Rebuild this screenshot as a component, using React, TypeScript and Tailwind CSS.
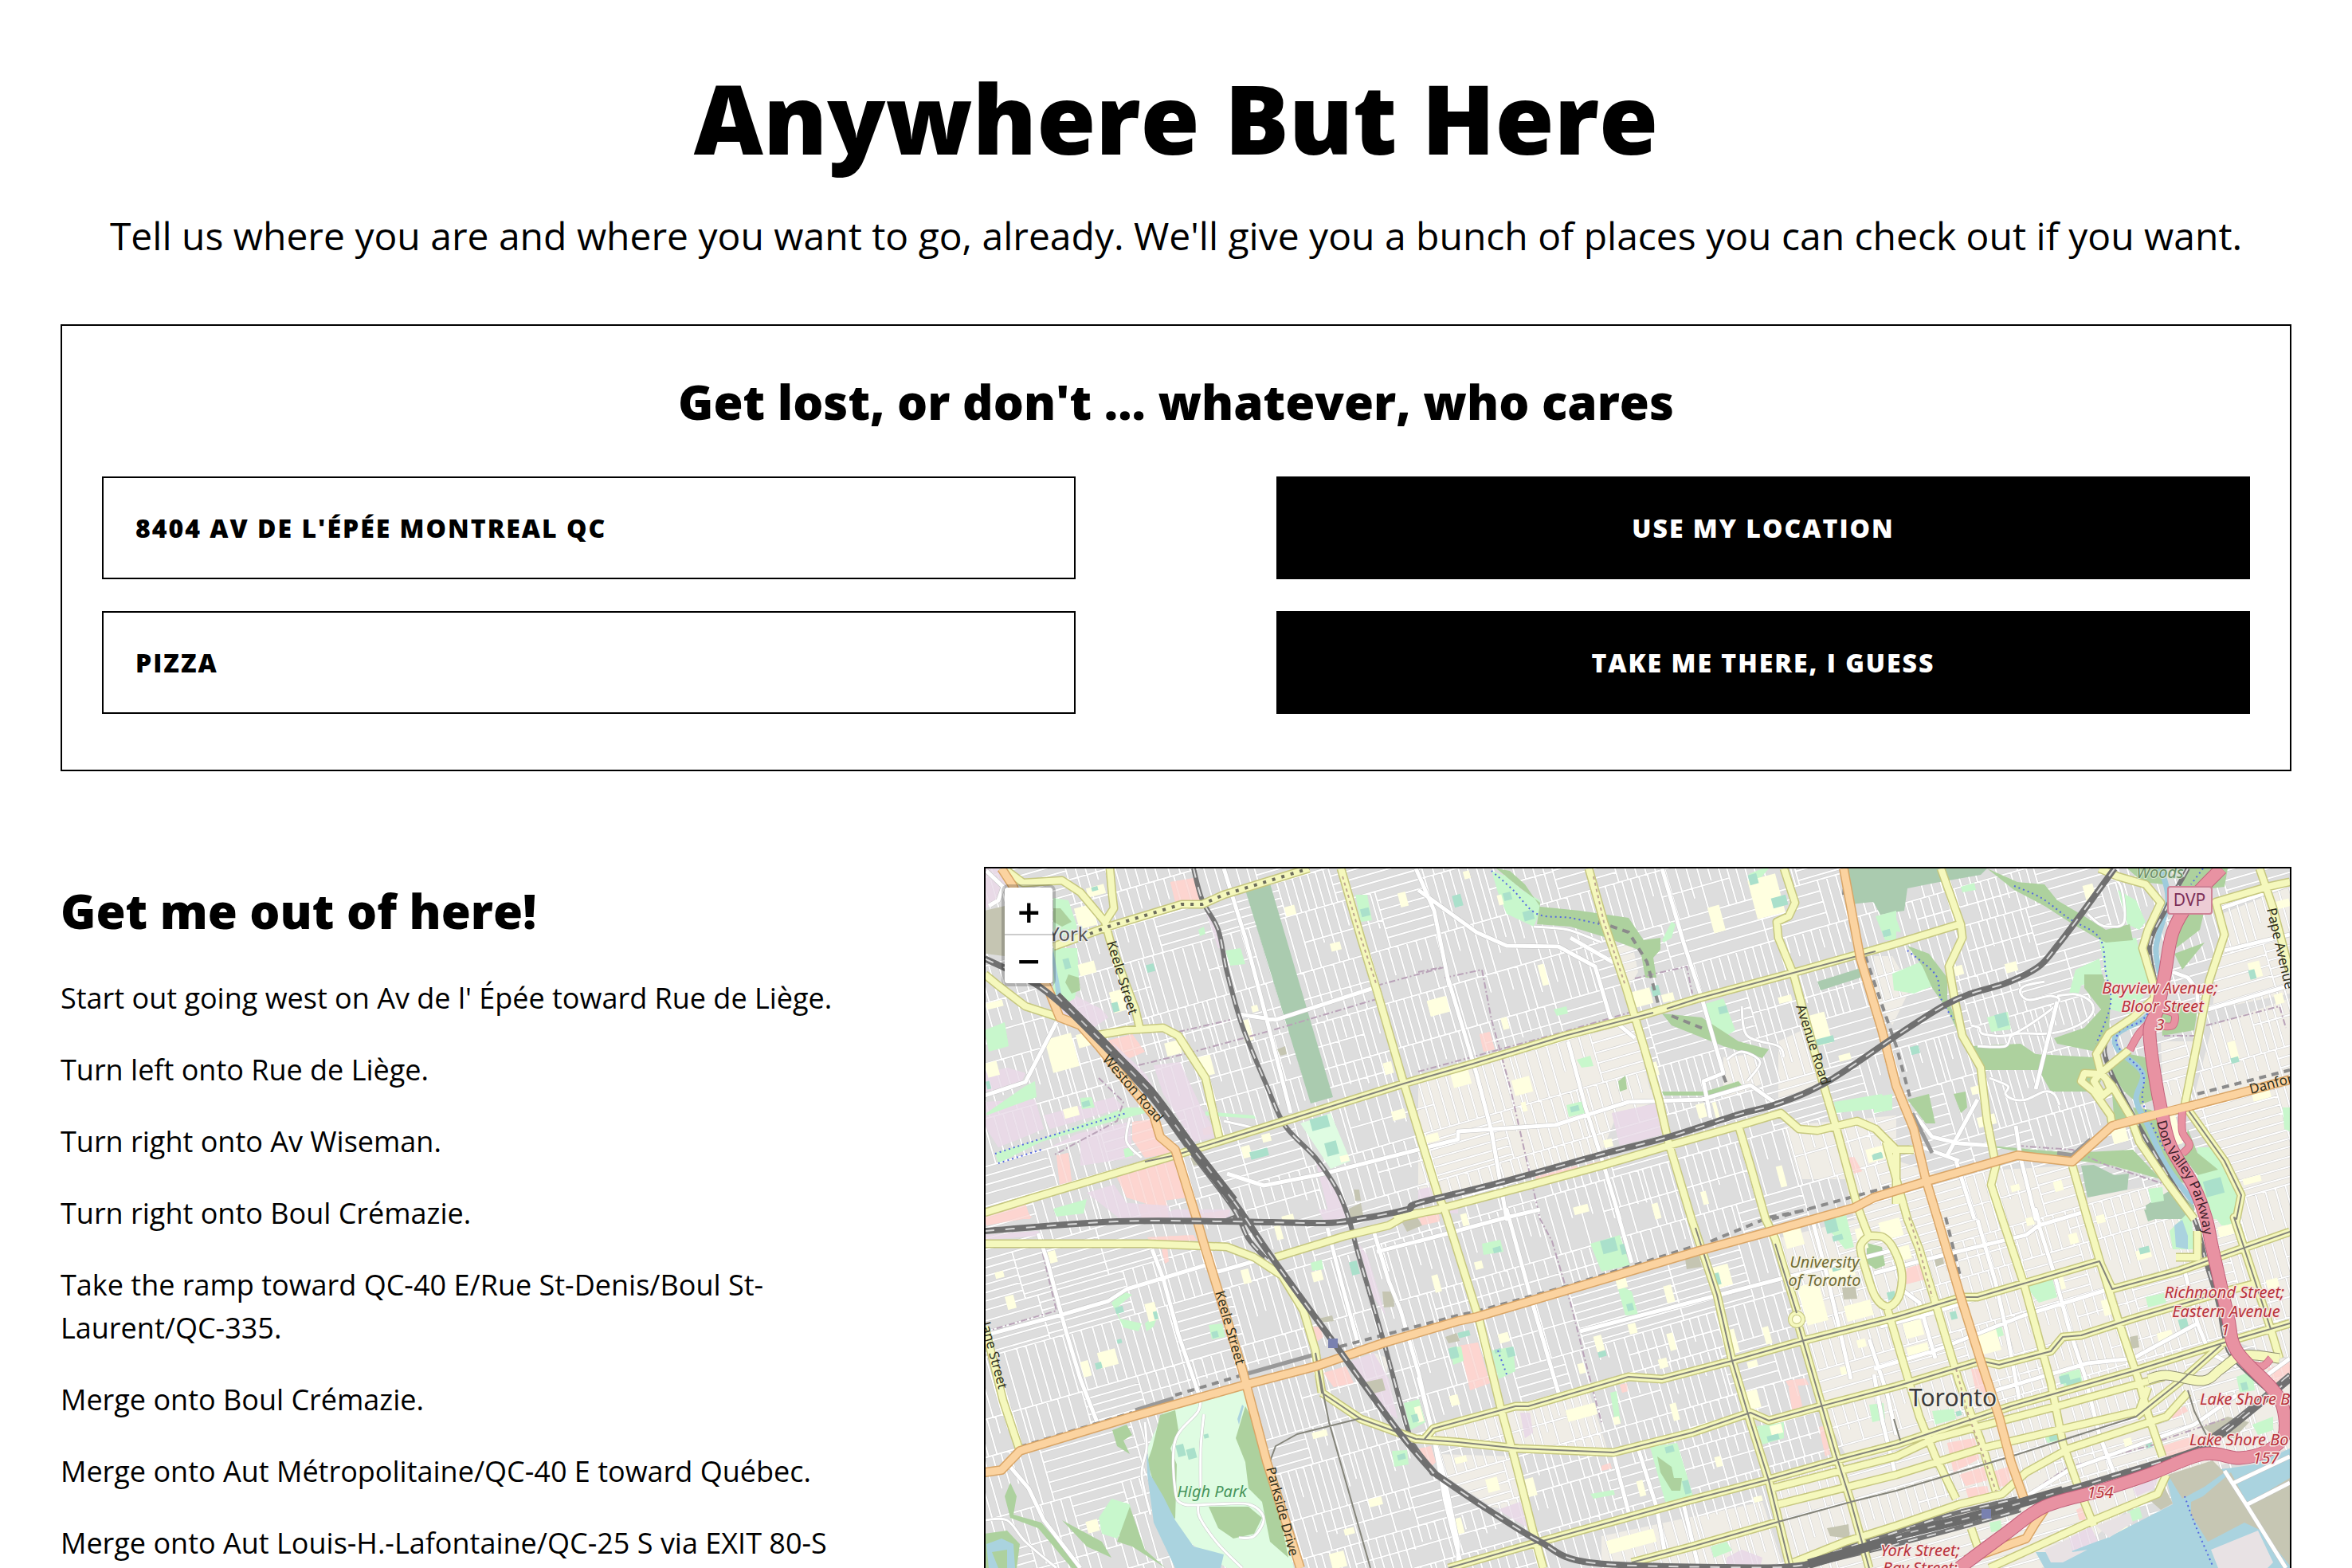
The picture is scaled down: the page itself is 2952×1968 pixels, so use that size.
import { useMemo } from "react";

type Pt = [number, number];

/* Survey sheets A-C (north row) and D-F (south row), each with its own origin on the map. */
const SHEETS: Record<string, Pt> = {
  A: [-7, -10],
  B: [543, -10],
  C: [1115, -10],
  D: [-7, 428],
  E: [543, 428],
  F: [1115, 428],
};

function points(src: string): Pt[] {
  let origin: Pt = SHEETS.A;
  const out: Pt[] = [];
  for (const token of src.trim().split(/\s+/)) {
    if (SHEETS[token]) {
      origin = SHEETS[token];
      continue;
    }
    const [x, y] = token.split(",").map(Number);
    out.push([Math.round(x * 0.3827 + origin[0]), Math.round(y / 3 + origin[1])]);
  }
  return out;
}

function line(src: string): string {
  return "M" + points(src).map((p) => p.join(",")).join("L");
}

function area(src: string): string {
  return line(src) + "Z";
}

/* Catmull-Rom curve through the points. */
function curve(src: string): string {
  const p = points(src);
  let d = `M${p[0][0]},${p[0][1]}`;
  for (let i = 0; i < p.length - 1; i++) {
    const a = p[Math.max(0, i - 1)];
    const b = p[i];
    const c = p[i + 1];
    const e = p[Math.min(p.length - 1, i + 2)];
    const f = (n: number) => n.toFixed(1);
    d += `C${f(b[0] + (c[0] - a[0]) / 6)},${f(b[1] + (c[1] - a[1]) / 6)} ${f(c[0] - (e[0] - b[0]) / 6)},${f(c[1] - (e[1] - b[1]) / 6)} ${c[0]},${c[1]}`;
  }
  return d;
}

const BEIGE = [
  "B 0,840 490,670 710,600 720,680 760,860 800,900 650,960 600,1100 0,1290",
  "B 1000,740 1100,730 1130,840 1000,900",
  "B 1180,680 1260,640 1320,850 1180,900",
  "B 1200,1000 1568,960 1568,1350 1430,1350 1400,1200 1250,1200",
  "B 640,330 700,300 720,420 690,480",
  "C 0,360 60,360 120,480 60,620 0,500",
  "C 0,1100 200,1180 640,1150 700,1350 0,1350",
  "C 940,680 1050,680 1010,930 950,930",
  "C 1110,620 1365,520 1365,1350 1210,1350 1200,1200 1040,930",
  "C 1140,200 1365,100 1365,500 1110,560",
  "C 700,1270 980,1210 1060,1350 700,1350",
  "D 1290,540 1340,560 1330,640 1260,600",
  "E 1170,110 1568,0 1568,1350 1230,1350 1150,1000 1400,920 1300,700 1250,440",
  "E 280,740 560,680 620,900 300,890 60,860 60,820",
  "E 60,920 320,930 360,1150 240,1120 80,1000",
  "E 600,1230 1130,1100 1200,1350 600,1350",
  "F 0,0 1060,0 1180,560 1365,560 1365,900 960,1010 600,1350 0,1350",
  "F 1100,0 1365,0 1365,560 1190,500",
];

const INDUSTRIAL = [
  "A 15,30 60,30 85,100 40,170 15,180",
  "A 15,800 90,780 150,800 130,850 15,870",
  "A 15,910 180,900 210,1010 60,1080 15,1000",
  "A 230,1080 320,1030 490,985 500,1120 330,1150 330,1050",
  "A 210,960 440,890 470,930 230,1010",
  "A 280,490 400,560 420,590 360,640 260,570",
  "A 570,770 655,760 720,920 780,1040 700,1060 600,880",
  "A 430,680 540,800 580,880 560,900",
  "A 350,1250 440,1220 480,1290 620,1300 620,1350 460,1350",
  "A 735,170 770,240 800,330 780,330",
  "A 1100,1130 1140,1180 1210,1350 1150,1350",
  "A 1480,1320 1568,1290 1568,1330",
  "B 635,950 780,915 810,1030 660,1075",
  "B 0,1240 40,1230 50,1270 0,1280",
  "D 15,95 190,80 200,100 15,115",
  "D 550,40 640,0 820,0 820,50",
  "D 1110,0 1200,0 1210,45 1130,45",
  "D 1200,580 1290,540 1340,640 1370,790 1310,740",
  "D 1240,130 1270,170 1330,400 1290,330",
  "E 335,765 365,765 375,840 350,860",
  "E 260,1130 335,1100 360,1200",
  "E 1010,1310 1060,1280 1130,1310 1120,1345 1010,1345",
  "F 640,1240 710,1195 735,1250 650,1290",
  "F 850,1050 930,1010 920,1050 860,1080",
];

const RETAIL = [
  "A 625,80 700,65 720,150 640,155",
  "A 410,680 500,655 540,720 490,745 460,730",
  "A 500,985 565,975 590,1050 640,1100 540,1120 500,1050",
  "A 440,1170 640,1120 680,1270 540,1290 480,1270",
  "A 250,1110 290,1100 300,1210 260,1220",
  "A 15,1335 150,1290 165,1350 15,1350",
  "A 730,1010 755,1000 760,1030 735,1035",
  "A 520,1300 610,1270 620,1350 530,1350",
  "B 200,655 235,645 250,710 215,720",
  "B 385,1190 520,1150 525,1165 390,1205",
  "B 550,1145 740,1090 740,1105 560,1160",
  "B 0,1330 65,1320 70,1350 0,1350",
  "B 1410,1120 1430,1115 1455,1170 1430,1180",
  "D 15,30 150,0 170,30 20,60",
  "D 700,20 820,0 810,30 740,45",
  "D 550,105 700,95 710,118 560,120",
  "D 595,150 615,148 620,195 605,205",
  "D 1125,615 1200,590 1225,655 1160,670",
  "D 1440,900 1480,890 1495,950 1480,970",
  "D 1090,440 1115,440 1125,480 1100,500",
  "E 135,512 195,500 235,655 170,680",
  "E 0,15 60,5 70,45 10,60",
  "E 1215,670 1245,660 1260,740 1225,755",
  "E 1205,645 1270,635 1280,660 1215,665",
  "E 1315,820 1330,815 1350,920 1335,930",
  "E 660,660 685,655 688,685 670,690",
  "E 600,965 630,955 635,975 600,985",
  "F 80,230 160,205 165,265 95,285",
  "F 320,600 350,600 400,690 340,710",
  "F 240,880 330,860 345,940 260,990",
  "F 280,1000 360,970 370,1020 300,1040",
  "F 385,990 440,970 450,1040 400,1045",
  "F 300,1050 370,1040 380,1080 310,1090",
  "F 945,890 1060,850 1080,900 960,940",
  "F 970,770 1020,740 1030,760 980,790",
  "F 1290,600 1365,570 1365,650 1330,680",
  "F 665,1130 685,1120 695,1170 675,1170",
];

const BROWN = [
  "A 15,190 80,170 80,360 15,350",
  "A 690,1120 715,1110 720,1145 700,1150",
  "A 975,710 1000,700 1005,730 985,735",
  "A 1210,1310 1250,1290 1260,1350 1215,1350",
  "A 1225,1240 1245,1240 1250,1280 1230,1280",
  "D 1320,310 1355,310 1360,365 1325,370",
  "D 1260,650 1320,635 1330,680 1280,695",
  "D 1380,40 1430,20 1450,60 1400,85",
  "D 1110,410 1155,400 1160,420 1120,425",
  "E 875,185 920,170 930,215 880,225",
  "E 1340,1200 1410,1185 1415,1240 1350,1230",
  "E 1390,295 1435,290 1440,335 1395,340",
  "E 90,480 125,465 135,495 100,505",
  "F 1080,820 1160,780 1230,800 1180,860 1110,850",
  "F 840,480 865,475 870,520 845,525",
  "F 195,180 225,175 230,205 205,215",
];

const CEMETERY = [
  "A 870,110 950,88 1158,890 1085,915",
  "B 1408,30 C 370,30 350,55 200,85 110,105 100,190 20,205 0,160 B 1490,155 1420,165",
  "B 1310,455 1450,405 1450,440 1320,490",
  "C 680,1150 720,1145 790,1185 835,1180 830,1240 700,1270",
  "C 890,1300 980,1235 1050,1300 1050,1350 895,1350",
  "F 885,0 1020,0 900,45",
];

const PARK = [
  "A 240,140 290,150 320,250 300,290 240,270",
  "A 240,330 320,330 325,440 310,520 280,540 240,500",
  "A 15,640 80,610 95,700 30,720",
  "A 20,950 150,850 180,830 185,890 20,960",
  "A 50,1100 220,1040 480,930 540,930 540,950 440,980 200,1060 60,1140",
  "A 805,340 855,330 870,390 820,395",
  "A 1230,130 1270,130 1285,225 1250,230",
  "A 715,260 735,250 740,275 720,285",
  "A 740,945 900,960 905,972 740,960",
  "A 240,1310 350,1275 340,1330 250,1340",
  "A 470,1085 495,1080 505,1110 475,1120",
  "A 330,895 365,890 375,930 335,935",
  "B 240,40 290,60 340,110 400,150 400,190 380,250 290,200 260,120",
  "B 940,540 1000,520 1040,640 1010,660 970,670",
  "B 485,920 540,905 550,950 495,965",
  "B 520,750 565,735 575,775 535,780",
  "B 1365,910 1520,880 1540,930 1370,950",
  "B 1500,210 1568,190 1568,300 1530,300",
  "B 445,560 485,550 490,575 455,585",
  "B 830,230 845,240 830,290 805,310 800,300",
  "B 1085,50 1130,30 1150,30 1090,110",
  "C 60,425 180,370 195,470 130,500 65,490",
  "C 800,110 860,150 890,230 870,260 830,240",
  "C 660,410 740,370 750,440 680,470 670,510 640,500",
  "C 740,300 860,290 880,380 910,470 840,580 775,560 760,440",
  "C 370,590 440,570 450,635 385,645",
  "C 285,100 330,85 335,110 290,120",
  "C 20,205 70,210 90,270 40,260",
  "C 0,890 60,880 60,940 0,950",
  "C 1060,1080 1110,1080 1205,1260 1185,1350 1110,1350 1060,1210",
  "C 550,750 610,740 610,775 560,775",
  "C 900,1235 945,1230 950,1280 910,1290",
  "C 1340,930 1365,930 1365,1020 1345,1010",
  "D 430,350 470,310 500,320 450,370 460,410 530,430 520,460 470,445",
  "D 750,435 795,430 805,480 760,490",
  "D 390,1160 430,1090 490,1110 500,1150 450,1240 400,1220",
  "D 540,430 585,390 570,440 545,460",
  "D 1085,200 1120,190 1125,225 1090,230",
  "D 1350,910 1400,905 1405,960 1360,970",
  "D 1390,730 1440,715 1460,800 1410,830",
  "E 210,130 270,115 280,160 215,170",
  "E 565,130 660,95 695,210 600,235",
  "E 240,530 310,515 320,610 265,640",
  "E 650,280 700,310 720,395 680,400",
  "E 105,520 140,515 150,570 115,585",
  "E 630,690 650,685 665,800 645,800",
  "E 760,895 850,880 905,1090 810,1100",
  "E 1110,815 1200,800 1200,860 1130,885",
  "E 1480,735 1525,730 1530,790 1490,800",
  "E 1325,25 1400,10 1430,140 1400,150 1350,80",
  "E 960,1270 1010,1250 1030,1285 970,1310",
  "E 565,1070 640,1055 645,1075 575,1090",
  "F 500,290 585,260 600,330 540,350",
  "F 610,620 675,600 685,650 625,670",
  "F 890,330 950,315 960,350 900,370",
  "F 190,760 260,750 270,790 200,810",
  "F 550,830 600,820 610,870 570,880",
  "F 380,440 415,430 425,475 390,485",
  "F 1190,630 1240,610 1250,680 1200,690",
  "F 1100,0 1190,0 1180,60 1140,60",
  "F 380,1180 415,1170 420,1210 385,1215",
  "F 830,1140 870,1120 880,1160 840,1180",
  "F 970,80 1040,0 1050,150 980,150",
  "F 1240,810 1310,780 1310,830 1260,850",
];

const MEADOW = [
  "A 1050,990 1150,950 1215,1130 1150,1160",
  "D 600,765 870,675 950,960 1030,1350 810,1350 740,1300 650,1220 560,1000 550,900",
  "B 1100,140 1150,130 1160,190 1110,200",
];

const FOREST = [
  "A 290,430 325,440 330,490 300,500 280,460",
  "A 240,180 265,180 300,230 270,250 240,230",
  "B 255,30 300,40 350,90 400,175 530,190 690,215 740,300 795,290 795,335 770,365 780,440 745,440 730,340 620,290 500,250 390,240 400,160 330,100",
  "B 800,575 930,590 1050,680 1150,710 1130,745 1000,700 830,620",
  "B 800,870 940,870 1050,830 1060,845 950,885 805,885",
  "B 655,830 680,810 685,860 660,870",
  "C 370,30 470,80 560,90 600,150 690,210 760,260 840,240 850,300 760,310 730,290 640,230 560,170 460,110",
  "C 690,430 750,430 775,520 770,650 730,720 600,690 590,670 690,630 745,560 690,480",
  "C 110,320 180,350 240,440 240,520 270,600 320,700 480,690 530,730 720,740 745,830 720,870 580,870 540,790 350,790 290,680 240,560 190,480 160,400",
  "C 1030,30 1160,30 1150,100 1000,120",
  "C 830,30 960,30 950,90 880,80",
  "C 1000,210 1085,185 1070,260 990,330",
  "C 985,350 1085,310 1010,410",
  "C 940,570 1000,530 1060,560 1050,640 945,660",
  "C 770,790 840,730 890,740 920,900 870,920 820,870",
  "C 850,930 910,940 980,1080 1060,1230 1000,1210 900,1090",
  "C 1030,1010 1060,1100 1130,1165 1060,1185 1010,1110",
  "C 350,1070 650,1100 850,1090 940,1200 780,1150 500,1100",
  "C 110,900 180,880 200,990 170,990",
  "C 260,880 300,870 305,930 285,950",
  "C 780,880 830,900 840,990 790,1000",
  "D 435,830 480,810 500,850 470,870 490,920 450,890",
  "D 450,1250 490,1120 540,1280 610,1350 500,1270",
  "D 100,1030 120,1080 110,1150 200,1180 330,1350 300,1350 190,1200 100,1160 80,1080",
  "D 270,1170 400,1250 430,1310 350,1270",
  "D 15,1220 90,1210 130,1260 120,1350 15,1350",
];

const WOODLAND = [
  "D 590,775 640,755 650,830 625,900 645,960 640,1165 600,1150 550,950 565,900",
  "D 870,740 900,800 960,1010 1010,1310 950,1250 925,1100 880,1050 870,950 840,860",
  "D 750,1120 880,1120 925,1160 900,1220 830,1240 780,1200",
  "E 785,930 830,970 840,1010 865,1010 860,1060 830,1060 795,990",
  "E 1470,125 1520,140 1530,210 1500,225 1470,200",
];

const WATER = [
  "D 545,900 560,1000 600,1080 640,1170 700,1270 800,1300 790,1350 640,1350 570,1180 548,1000",
  "D 20,1260 70,1240 110,1260 115,1350 90,1350 90,1280 40,1290 60,1350 30,1350",
  "D 865,740 850,810 845,790 860,735",
  "A 240,340 270,520 250,520 235,360",
  "F 530,1290 640,1290 730,1250 760,1240 980,1110 960,1010 1010,1000 1250,960 1365,900 1365,1350 560,1350",
  "F 985,60 1010,40 1030,100 1030,150 990,140",
];

const HARBOUR = [
  "F 965,1000 1110,945 1150,990 1085,1045 1010,1088",
  "F 1040,1100 1080,1080 1170,990 1225,1110 1270,1210 1215,1180 1095,1252 1040,1150",
  "F 1225,1108 1365,1010 1365,1340 1300,1250",
  "F 900,1090 950,1040 980,1108 940,1130",
];

const QUAYS = [
  "F 560,1280 640,1240 650,1290 700,1280 620,1330 580,1330",
  "F 1105,1280 1260,1210 1310,1330 1290,1350 1130,1350",
  "F 730,1190 840,1140 850,1180 770,1235",
];

/* x,y,w,h of small plots in sheet units. */
const SCHOOLS =
  "A 315,170,60,80 350,95,60,35 325,385,55,45 430,490,45,80 225,660,90,130 320,650,40,50 610,680,50,50 725,735,40,75 1000,170,35,35 1375,120,25,55 1470,520,65,60 1325,760,30,45 1350,940,45,35 1150,310,35,30 275,930,50,35 20,760,40,55 20,530,55,25 860,600,30,80 890,545,20,25 1465,1030,40,30 925,1030,30,30 1180,1110,30,25 860,1075,30,45 B 1095,60,95,150 960,170,40,100 400,390,20,80 35,520,60,60 275,590,20,45 705,485,60,60 1285,575,60,120 1180,510,45,25 110,790,60,60 310,820,60,60 340,910,15,35 915,915,30,55 800,500,40,30 970,910,12,60 1470,1080,60,50 1180,1150,22,80 770,1290,22,60 930,1245,18,50 510,1300,50,30 20,1035,40,25 610,1050,30,30 765,760,20,50 1380,730,40,25 150,40,20,30 260,130,15,40 C 265,395,30,35 430,385,40,35 320,850,35,30 340,960,60,40 1230,380,40,60 1165,680,25,70 1315,500,30,40 590,1205,30,40 450,1220,30,25 1240,870,60,30 1210,1190,60,25 690,90,35,60 975,960,25,110 1310,150,55,30 780,1010,50,50 F 20,40,70,70 100,420,60,60 340,460,70,80 640,90,30,40 860,150,50,35 750,340,25,60 610,250,15,50 110,510,70,45 820,860,25,35 930,460,50,35 1290,260,40,60 60,140,60,50 730,20,30,30 500,30,25,30 780,1160,50,60 1130,60,50,40 D 225,155,25,45 85,325,30,50 50,235,30,25 390,530,60,60 335,570,25,60 545,350,35,70 860,225,25,55 1090,230,35,40 970,60,20,55 1490,250,18,60 1275,1085,45,30 1195,1200,35,25 1150,1290,50,60 1545,700,25,40 1430,740,22,60 990,20,40,25 350,1170,40,45 1090,835,50,25 E 50,245,22,65 145,15,22,60 185,195,25,30 265,465,35,35 580,475,25,60 650,260,35,35 810,285,25,65 820,465,22,65 970,210,55,80 1135,440,22,65 1025,450,20,90 1080,680,40,70 830,730,20,65 790,560,30,35 485,740,100,45 690,430,25,40 525,580,20,40 225,1010,40,50 355,1010,30,70 975,930,22,40 1155,810,40,35 120,930,40,25 1260,280,70,150 1400,350,90,60 1440,70,30,80 1340,200,90,60 720,1020,22,60 620,1225,160,50 1100,1080,30,20 125,1160,20,60 105,700,25,35 1385,590,25,30 1440,490,30,30 1200,60,60,80 1080,570,35,25 640,780,20,30";

const PITCHES =
  "A 545,390,25,30 435,535,22,35 365,100,22,16 1085,965,60,45 1135,1060,40,50 1250,180,30,30 885,1090,60,30 20,830,14,30 335,905,25,20 275,370,20,40 B 1085,50,30,40 1160,135,50,40 345,190,35,35 985,550,28,28 1305,665,60,25 115,130,28,45 280,120,25,30 500,925,30,20 765,470,25,40 1490,1105,35,22 1530,260,15,25 C 400,575,40,50 120,700,30,30 1085,1200,60,60 1230,410,20,35 1170,740,25,20 30,260,25,25 0,1100,25,20 D 445,365,25,25 760,460,22,25 380,575,22,25 570,385,14,30 645,885,25,45 680,900,28,40 1215,195,25,50 1370,920,25,20 1415,770,20,30 450,490,16,14 1540,520,28,40 735,845,15,15 E 600,110,50,50 665,130,25,40 590,535,25,20 965,240,25,45 250,525,20,15 290,520,25,35 685,355,22,28 130,460,40,20 810,890,30,25 870,1020,22,50 1145,850,40,20 1360,95,35,20 1335,35,40,50 1540,310,25,30 1355,200,30,30 245,140,25,20 105,530,25,30 F 610,625,35,30 1000,410,30,40 250,385,20,30 630,640,50,20 890,875,20,22 870,140,35,25 1205,650,22,30 270,760,18,18 575,850,30,20";

function Plots({ src, className }: { src: string; className: string }) {
  let origin: Pt = SHEETS.A;
  const out: { x: number; y: number; w: number; h: number }[] = [];
  for (const t of src.split(" ")) {
    if (SHEETS[t]) {
      origin = SHEETS[t];
      continue;
    }
    const [x, y, w, h] = t.split(",").map(Number);
    out.push({
      x: Math.round(x * 0.3827 + origin[0]),
      y: Math.round(y / 3 + origin[1]),
      w: Math.round(w * 0.3827),
      h: Math.round(h / 3),
    });
  }
  return (
    <g className={className}>
      {out.map((r, i) => (
        <rect key={i} x={r.x} y={r.y} width={r.w} height={r.h} transform={`rotate(-15 ${r.x + r.w / 2} ${r.y + r.h / 2})`} />
      ))}
    </g>
  );
}

const WHITE_ROADS = [
  "A 20,40 75,100 60,150 30,170",
  "A 15,885 150,835 250,610",
  "A 800,30 870,290 940,600 1020,950",
  "A 850,580 970,600 1290,480",
  "A 1430,30 1490,190 1540,470 B 100,450 190,800 240,1020 290,1350 E 290,0 370,340 460,690",
  "B 0,110 190,270 290,320 460,325 580,400 630,590 710,670",
  "B 500,290 640,385",
  "B 800,30 870,310 930,520 1000,800 935,830 960,970",
  "A 810,1180 930,1225 1130,1180 1568,1050 B 130,1020 450,995 690,910 930,900 1090,845 1180,920",
  "B 490,680 550,930 610,1150 660,1350 E 650,0 700,200",
  "D 15,475 270,395 420,345 480,300 740,210 780,235 900,195",
  "D 190,90 220,190 280,450 330,640 385,800",
  "D 565,150 600,260 650,470 715,690",
  "D 100,970 160,1050 210,1170 330,1350",
  "D 1140,70 1190,290 1240,510",
  "D 1285,60 1340,270 1380,380 1440,620 1480,820 1520,1000 1568,1260 E 130,1350",
  "D 1300,160 1568,80",
  "E 0,630 50,850 90,1100 145,1350",
  "E 0,120 290,30 400,0",
  "E 530,460 960,330 1190,260 1568,150",
  "E 640,920 690,1140",
  "E 720,900 780,1120 810,1300",
  "E 870,1110 920,1350",
  "E 1290,30 1340,250 1380,440 1420,640",
  "E 1480,490 1540,700 1568,850",
  "F 20,440 190,390 430,300 520,270",
  "F 0,240 230,170 500,95 540,60 690,10",
  "F 540,60 590,240 640,450 690,620 740,850 790,1000",
  "F 340,40 400,280 440,480 480,740",
  "F 0,600 200,530 490,400 770,300",
  "F 400,680 700,580 850,560 1060,430 1020,230",
  "F 1060,430 1100,540 1190,590",
  "F 90,300 150,350 200,560",
  "F 500,1080 640,980 1050,810 1190,700",
  "F 1180,1030 1365,930",
  "F 1150,985 1220,1110 1350,1350",
  "F 1225,1110 1365,1030",
  "F 0,620 30,800 70,1000",
  "F 1270,640 1365,560",
  "C 1150,340 1365,280",
  "C 1095,560 1365,470",
  "C 980,420 1030,440 1060,490 1060,540",
  "C 135,960 190,1040 280,1065 390,1075",
  "C 240,1110 340,900",
  "C 465,1000 480,1120 530,1350 F 530,0 545,70",
  "C 270,1130 330,1350",
  "C 160,1080 280,1130",
  "C 1140,180 1365,90",
  "C 600,530 530,860",
];

const CURVED_WHITE = [
  "D 720,700 715,760 640,870 640,1060 670,1110 760,1110 880,1110 930,1160 900,1230 850,1235",
  "D 715,1110 720,1160 780,1260 860,1350",
  "D 735,770 725,900 725,1090",
  "D 540,800 545,900 530,1000 560,1150",
  "D 15,1170 90,1170 150,1250 250,1350",
  "C 320,620 345,630 360,655 460,650 600,540 580,510 510,525 480,500 490,475 560,455",
  "C 380,820 440,850 430,880 460,900 500,900 560,870 590,880 610,920",
  "C 600,510 660,505 710,530 715,575 670,620 580,650 460,655 430,700 340,700",
  "C 730,130 770,70 810,100 820,230 770,250 740,240 700,200",
  "B 380,250 490,260 600,310",
  "B 1060,550 1080,660 1180,700 1200,740",
  "B 1010,750 1060,720 1120,760 1080,830",
  "A 800,980 870,1000 910,1010",
  "A 490,970 480,1060 530,1120",
];

const YELLOW = [
  "A 90,40 140,85 270,75 330,120 410,230",
  "A 425,30 435,130 440,180 410,230 425,300 470,440 510,560 525,640",
  "A 240,325 420,250 660,165 730,165 800,130 1080,30",
  "A 370,660 480,640 600,630 650,660 740,820 765,950 785,1040",
  "A 15,430 60,470 150,550 260,590",
  "A 15,1325 160,1275 640,1110 1390,840 B 180,765 480,660 710,590 920,520 1220,425 1450,350 1560,315 C 280,240",
  "A 1185,30 1250,290 1300,490 1390,840 B 65,1260 E 85,0 200,420 270,740 320,950 380,1220 410,1350",
  "B 560,30 610,230 680,470 740,700 790,900 820,1060 895,1350 E 915,100 980,320 1030,570 1090,800 1150,1020 1220,1350",
  "B 1200,30 1235,160 1215,210 1175,230 1180,290 1230,430 1330,850 1370,1000 1440,1300 E 1460,50 1480,105",
  "F 45,375 90,550 150,780 200,930 270,1090",
  "A 1360,1350 1510,1310 B 370,1220 600,1150 820,1075 1050,1000 1190,950 1250,1010 1310,1018 1440,980 1500,1010 1568,1090 E 1568,-20",
  "B 1540,1090 C 60,1090 130,1090",
  "B 1050,1000 1090,1150 1140,1350 E 1170,110 1240,380",
  "E 1250,445 1300,650 1370,920 1420,1100 1480,1350",
  "D 15,130 550,130 810,140 900,180 990,250 1060,380 1100,530 1120,690",
  "D 970,180 1200,100 1340,60 1400,20 1510,0",
  "C 220,30 285,240 290,290 245,400 265,520 290,660 350,780 370,980 400,1150 385,1220 420,1350 F 490,280 580,650 620,880 670,1040 720,1190",
  "C 40,1060 110,1350 F 150,150 210,380 280,650 350,870 400,1060",
  "C 650,1150 700,1350 F 740,190 800,410 870,650 900,770 945,930",
  "C 740,30 800,60 890,90 940,160 900,260 880,330 915,460 920,520 850,590 770,650 730,730 745,800 780,850 840,960 870,1060 960,1210 1050,1350",
  "C 835,715 740,805 690,800 680,830 720,870 775,960 780,1000",
  "C 740,805 720,830 750,885 775,860 760,820",
  "C 1365,80 1290,100 1120,155 1150,280 1100,450 1060,680 1020,920",
  "C 1265,30 1310,180 1365,420",
  "C 1020,920 1150,1130 1205,1260 1190,1350 F 1180,30 1300,450 1330,560",
  "D 1120,690 1250,790 1430,865 1568,875 E 330,900 640,915 900,840 1090,765 1150,795 1320,740 1568,665 F 350,570 410,585 580,535 620,480 680,475 850,410 1150,310 1250,280",
  "E 20,865 50,825 320,740 360,740 690,630 800,640 1030,570 1260,495 1568,405 F 290,330 340,330 740,195 780,300 1000,230 1365,85",
  "E 100,1350 400,1250 870,1100 1140,1020 1370,945 1568,885 F 450,740 850,610 1150,500 1365,430",
  "E 700,1330 900,1270 1180,1175",
  "E 1160,1050 1568,930 F 200,860 600,740 950,630",
  "E 1180,1110 1568,1000 F 350,900 600,830 870,760 900,670",
  "E 1230,1330 1400,1250 1568,1190 F 280,1110 420,1070 500,990 640,900 960,780 1030,690",
  "F 380,1350 720,1170 930,1070 960,1000",
  "F 860,780 1000,650 1140,510",
  "F 320,1200 340,1270",
  "D 15,440 75,720 130,910",
  "F 990,180 1060,180 1060,80",
];

const WIDE_YELLOW = ["F 900,640 960,625 1080,645 1140,600 1210,550 1330,560"];

const LOOP = "E 1480,100 1450,140 1470,240 1500,330 1540,365 1575,330 1585,240 1560,150 1525,105 1480,100";

const ORANGE = [
  "A 70,30 110,100 180,380 230,500 260,590 330,620 390,700 570,960 590,1040 640,1090 710,1350 D 740,150 860,600 940,950 1050,1350",
  "D 15,990 70,980 130,910 500,780 870,660 1100,590 1320,505 1568,420 E 190,405 500,300 700,230 920,155 1150,85 1430,-5 C 0,1270 170,1210 470,1110 650,1135 780,1000 1020,930 1220,870 1365,825",
  "B 1395,30 1450,370 1520,640 1568,850 C 130,1010 170,1200 210,1350 F 290,350 350,570 410,780 450,950 490,1085",
  "F 560,1130 530,1180 500,1240 300,1320",
];

const MOTORWAY = [
  "C 1140,30 1040,150 980,270 955,430 930,560 905,640 920,800 945,960 975,1080 1050,1230 1090,1350 F 1110,150 1160,400 1190,530 1300,670 1340,740 1345,850 1290,910 1200,935 1080,920 900,1000 740,1060 560,1120 430,1220 280,1350",
];

const RAMPS = [
  "C 920,590 870,650 840,715",
  "C 945,560 985,580 980,620 945,625",
  "C 1010,940 1010,1020 1035,1070 1010,1105",
  "F 1200,570 1270,590 1300,560",
];

const TRAMS = [
  "A 540,1135 640,1110 1390,840 B 180,765 480,660 770,573",
  "B 815,558 920,520 1220,425 1500,342",
  "E 910,70 980,320 1030,570 1090,800 1150,1020 1220,1350",
  "E 1170,130 1240,390",
  "E 1250,445 1300,650 1370,920 1420,1100 1480,1350",
  "D 1100,540 1120,690 1250,790 1430,865 1568,875 E 330,900 640,915 900,840 1090,765 1150,795 1320,740 1568,665 F 350,570 410,585 580,535 620,480 680,475 850,410 1150,310",
  "E 20,865 50,825 320,740 360,740 690,630 800,640 1030,570 1260,495 1568,405 F 290,330 340,330 740,195 780,300 1000,230 1365,85",
  "E 100,1350 400,1250 870,1100 1140,1020 1370,945 1568,885 F 450,740 850,610 1150,500 1365,430",
  "E 700,1330 900,1270 1180,1175 1420,1100 1568,1060 F 450,930 860,780 1000,650 1140,510",
  "C 1020,920 1150,1130 1205,1260 1190,1350 F 1180,30 1300,450",
  "D 1100,540 1145,800 1280,1350",
  "D 940,980 970,890 1040,845 1250,785",
  "F 1030,680 1050,760 1090,850",
  "F 85,870 65,790",
];

const RAIL = [
  "A 15,370 200,480 400,680 560,860 700,1080 850,1310 D 950,170 1160,500 1370,830 1480,980 E 60,1000 230,1130 400,1250 560,1330 1000,1347 1250,1340 1400,1290 1568,1235 F 300,1160 450,1110 650,1050 800,1000 1050,910 1150,840 1365,640",
  "D 15,80 450,45 800,45 1130,50 1240,35 1400,0 B 0,1290 260,1215 590,1110 820,1040 1040,960 1180,915 1340,835 1568,660 C 230,545 320,500 440,460 540,400 600,320 660,230 790,30",
];

const RAIL_THIN = [
  "A 700,30 730,150 780,260 810,420 860,620 940,850 1000,1000 1100,1120 1170,1240 1210,1350 D 1240,170 1320,480 1400,820 1430,900 1500,1000",
  "C 1030,30 960,180 905,320 920,500 830,600 760,680 770,780 850,960 960,1180 1050,1350 F 1090,200 1130,350 1150,480 1180,560 1310,700",
  "D 800,45 850,20 840,0",
  "A 400,700 560,890 700,1110 830,1310 D 880,110 940,190",
  "F 1090,870 1200,780 1365,620",
  "E 1240,1350 1568,1260 F 300,1190 480,1130",
  "E 1300,1310 1568,1215 F 250,1150 470,1090",
];

const YARD = "A 250,510 400,680 560,870 700,1090 830,1280";
const UNION_YARD = "F 120,1215 300,1165 450,1115 620,1060";

const SUBWAY = [
  "D 130,895 500,765",
  "D 640,700 860,625",
  "D 1180,515 1568,400 E 190,385 500,285 900,140",
  "E 960,120 1150,30 1280,0",
  "B 1160,1350 1568,1220",
  "B 1400,60 1395,130",
  "B 1465,360 1568,700 C 120,900",
  "F 235,30 285,260",
  "C 1060,880 1365,790",
  "B 1000,810 1015,850",
  "B 590,230 690,270 750,380 790,550",
  "B 830,585 940,635",
];

const SUBWAY_OPEN = ["D 510,755 635,710", "D 850,628 1090,548", "C 125,950 190,1100", "C 600,1100 650,1110 710,1050"];

const FOOTWAYS = [
  "A 650,645 820,600",
  "A 520,770 700,720 960,640 1310,520 1400,830",
  "A 390,820 470,910 450,980 240,1110",
  "B 0,420 90,400 90,440 210,410 240,600 300,850 350,1100 400,1350 E 440,120 500,350 560,620 600,800",
  "B 710,445 880,400 900,500",
  "B 0,795 460,650 700,570",
  "A 1300,470 1530,400",
  "C 950,660 1070,660",
  "C 1090,620 1330,550 1350,630",
  "C 470,1075 650,1090 760,1145 960,1220",
  "D 195,120 250,380 20,460",
  "F 940,870 1150,790",
  "F 520,1060 640,970 940,880",
];

const CREEKS = [
  "B 240,40 310,110 390,200 500,215 620,245",
  "A 50,1105 220,1040 480,950",
  "A 60,1140 210,1085",
  "C 110,340 200,430 220,520 260,600",
  "C 460,95 550,140 640,220 740,290 760,420 775,540 730,690",
  "C 940,500 880,600 810,640 800,700 880,800 880,900 910,990 960,1100",
  "C 1080,30 1040,90",
  "E 260,530 290,620",
  "F 1020,1080 1050,1180 1110,1340",
];

const RIVER = "C 940,30 965,150 925,330 945,500 890,590 800,650 800,710 880,800 860,900 900,1000 960,1150 1050,1290";

function seeded(seed: number) {
  let s = seed;
  return () => {
    s = (s * 1664525 + 1013904223) % 4294967296;
    return s / 4294967296;
  };
}

/* Residential street blocks in the city grid's own axes. */
function streetGrid(): string {
  const rnd = seeded(41);
  let d = "";
  let y = -320;
  while (y < 1240) {
    const h = 42 + Math.round(rnd() * 34);
    let x = -320 + Math.round(rnd() * 40);
    while (x < 1960) {
      const w = 60 + Math.round(rnd() * 70);
      d += `M${x},${y}v${h}M${x},${y}h${w}`;
      const mode = rnd();
      if (mode < 0.74) {
        const step = 10 + Math.round(rnd() * 4);
        for (let i = step; i < w - 4; i += step) {
          const cut = rnd() < 0.25 ? Math.round(h * (0.4 + rnd() * 0.3)) : h;
          d += `M${x + i},${y}v${cut}`;
        }
        if (rnd() < 0.4) d += `M${x},${y + Math.round(h / 2)}h${w}`;
      } else {
        const step = 10 + Math.round(rnd() * 4);
        for (let i = step; i < h - 4; i += step) d += `M${x},${y + i}h${w}`;
      }
      x += w;
    }
    y += h;
  }
  return d;
}

function Areas({ list, className }: { list: string[]; className: string }) {
  return <path d={list.map(area).join("")} className={className} />;
}

function Road({ d, casing, fill }: { d: string; casing: string; fill: string }) {
  return (
    <>
      <path d={d} className={casing} />
      <path d={d} className={fill} />
    </>
  );
}

type LabelProps = { at: string; text: string; className: string; rotate?: number; middle?: boolean };

function Label({ at, text, className, rotate = 0, middle = false }: LabelProps) {
  const [[x, y]] = points(at);
  return (
    <text
      x={x}
      y={y}
      textAnchor={middle ? "middle" : "start"}
      transform={rotate ? `rotate(${rotate} ${x} ${y})` : undefined}
      className={className}
      paintOrder="stroke"
    >
      {text}
    </text>
  );
}

const STREET = "fill-[#2f2f1c] stroke-none text-[17px]";
const EXIT = "fill-[#b8323c] stroke-[#f6e6e2] stroke-[3px] text-[20px] italic";

function CityMap() {
  const grid = useMemo(streetGrid, []);
  const yellow = [...YELLOW.map(line), curve(LOOP)].join("");
  const orange = ORANGE.map(line).join("");
  const motorway = MOTORWAY.map(curve).join("");
  const ramps = RAMPS.map(curve).join("");
  const rail = RAIL.map(curve).join("");
  const railThin = RAIL_THIN.map(curve).join("");
  return (
    <svg
      role="img"
      aria-label="Street map of Toronto"
      viewBox="0 0 1638 878"
      preserveAspectRatio="xMinYMin slice"
      className="block h-full w-full fill-none font-['Noto_Sans',sans-serif] [stroke-linejoin:round]"
    >
      <rect width="1638" height="878" className="fill-[#dddddd]" />
      <Areas list={BEIGE} className="fill-[#f0ede6]" />
      <Areas list={INDUSTRIAL} className="fill-[#e9dae7]" />
      <Areas list={RETAIL} className="fill-[#fdd4d0]" />
      <g transform="rotate(-16 819 439)">
        <path d={grid} className="stroke-[#cecece] stroke-[3px]" />
        <path d={grid} className="stroke-white stroke-2" />
      </g>
      <Areas list={RETAIL} className="fill-[#fdd4d0]/80" />
      <Areas list={INDUSTRIAL} className="fill-[#e9dae7]/80" />
      <Areas list={BROWN} className="fill-[#c5c5b2]" />
      <Areas list={CEMETERY} className="fill-[#aacbaf]" />
      <Areas list={PARK} className="fill-[#c8f7cc]" />
      <Areas list={FOREST} className="fill-[#add19e]" />
      <Areas list={MEADOW} className="fill-[#dffce2]" />
      <Areas list={WOODLAND} className="fill-[#add19e]" />
      <Plots src={SCHOOLS} className="fill-[#ffffe0]" />
      <Plots src={PITCHES} className="fill-[#aae0cb]" />
      <Areas list={WATER} className="fill-[#aad3df]" />
      <Areas list={HARBOUR} className="fill-[#c6c6b3]" />
      <Areas list={QUAYS} className="fill-[#e8e2e4]" />
      <path d={curve(RIVER)} className="stroke-[#9fcbdc] stroke-[7px]" />

      <path d={FOOTWAYS.map(line).join("")} className="stroke-[#b9a3b8] stroke-2 [stroke-dasharray:8_3_2_3]" />
      <Road d={CURVED_WHITE.map(curve).join("")} casing="stroke-[#c6c6c6] stroke-[4px]" fill="stroke-white stroke-[3px]" />
      <Road d={WHITE_ROADS.map(line).join("")} casing="stroke-[#c2c2c2] stroke-[6px]" fill="stroke-white stroke-[5px]" />
      <path d={CREEKS.map(curve).join("")} className="stroke-[#5468e0] stroke-2 [stroke-dasharray:2_4]" />
      <path d={SUBWAY.map(line).join("")} className="stroke-[#8b8b8b] stroke-[4px] [stroke-dasharray:9_7]" />
      <path d={SUBWAY_OPEN.map(line).join("")} className="stroke-[#999999] stroke-[5px]" />

      <Road d={railThin} casing="stroke-[#757575] stroke-[6px]" fill="stroke-[#dcdcdc] stroke-2 [stroke-dasharray:12_12]" />

      <Road d={yellow} casing="stroke-[#c6c77f] stroke-[11px]" fill="stroke-[#f5f8bd] stroke-[8px]" />
      <Road d={WIDE_YELLOW.map(curve).join("")} casing="stroke-[#8f8f70] stroke-[13px]" fill="stroke-[#f5f8bd] stroke-[11px]" />
      <path
        d={line("A 360,275 420,250 660,165 730,165 800,130 1080,30")}
        className="stroke-[#6d6d5c] stroke-[4px] [stroke-dasharray:4_8]"
      />
      <path
        d={line("A 1190,60 1250,290 1300,470") + line("B 575,60 610,230 680,470") + line("F 115,30 150,150 190,330") + line("F 270,600 310,780 350,900 400,1060")}
        className="stroke-[#bda68f] stroke-2 [stroke-dasharray:4_4]"
      />
      <circle cx="1018" cy="566" r="8" className="fill-[#ffffe0] stroke-[#c6c77f] stroke-[6px]" />
      <circle cx="1018" cy="566" r="8" className="stroke-[#f5f8bd] stroke-[4px]" />
      <path d={TRAMS.map(line).join("")} className="stroke-[#84847a] stroke-2" />

      <Road d={orange} casing="stroke-[#d9a566] stroke-[12px]" fill="stroke-[#fbd3a0] stroke-[9px]" />
      <Road d={rail} casing="stroke-[#707070] stroke-[8px]" fill="stroke-[#d8d8d8] stroke-2 [stroke-dasharray:12_14]" />
      <path d={line(YARD) + line(UNION_YARD) + line("E 1280,1335 1568,1240")} className="stroke-[#6b6b6b] stroke-[12px]" />
      <path d={line(YARD) + line(UNION_YARD)} className="stroke-[#c4c4c4] stroke-2 [stroke-dasharray:10_12]" />
      <Road d={ramps} casing="stroke-[#cf6f86] stroke-[10px]" fill="stroke-[#e892a2] stroke-[8px]" />
      <Road d={motorway} casing="stroke-[#c2617b] stroke-[17px]" fill="stroke-[#e892a2] stroke-[15px]" />
      <path d={line("C 790,995 850,975 1020,930 1050,920")} className="stroke-[#fbd3a0] stroke-[9px]" />

      <rect x="430" y="590" width="12" height="12" className="fill-[#7981b0]" />
      <rect x="1250" y="804" width="12" height="12" className="fill-[#7981b0]" />

      <Label at="A 225,303" text="York" className="fill-[#555555] stroke-[#ececec] stroke-[3px] text-[24px]" />
      <Label at="A 415,310" rotate={73} text="Keele Street" className={STREET} />
      <Label at="A 400,750" rotate={49} text="Weston Road" className={STREET} />
      <Label at="B 1238,548" rotate={72} text="Avenue Road" className={STREET} />
      <Label at="C 1288,182" rotate={77} text="Pape Avenue" className={STREET} />
      <Label at="C 1235,880" rotate={-15} text="Danforth" className={STREET} />
      <Label at="D 770,312" rotate={74} text="Keele Street" className={STREET} />
      <Label at="D 2,430" rotate={75} text="Jane Street" className={STREET} />
      <Label at="D 937,975" rotate={75} text="Parkside Drive" className={STREET} />
      <path id="parkway" d={curve("C 928,985 960,1090 1030,1210 1070,1330 F 1085,120")} />
      <text className="fill-[#40202a] text-[17px]">
        <textPath href="#parkway">Don Valley Parkway</textPath>
      </text>

      <Label at="C 937,65" middle text="Woods" className="fill-[#6d8f69] stroke-[#d3e5cc] stroke-2 text-[20px] italic" />
      <rect x="1484" y="23" width="55" height="34" rx="3" className="fill-[#edccd5] stroke-[#cf8296] stroke-2" />
      <Label at="C 1036,171" middle text="DVP" className="fill-[#7c2f58] text-[21px]" />
      <Label at="C 938,500" middle text="Bayview Avenue;" className={EXIT} />
      <Label at="C 945,570" middle text="Bloor Street" className={EXIT} />
      <Label at="C 938,640" middle text="3" className={EXIT} />
      <Label at="D 760,1083" middle text="High Park" className="fill-[#47945a] stroke-[#dffce2] stroke-2 text-[20px] italic" />
      <Label at="E 1333,218" middle text="University" className="fill-[#6f6a35] stroke-[#f5f3e0] stroke-[3px] text-[20px] italic" />
      <Label at="E 1333,288" middle text="of Toronto" className="fill-[#6f6a35] stroke-[#f5f3e0] stroke-[3px] text-[20px] italic" />
      <Label at="F 258,742" middle text="Toronto" className="fill-[#3c3c3c] stroke-[#f3f1e8] stroke-[3px] text-[30px]" />
      <Label at="F 1150,332" middle text="Richmond Street;" className={EXIT} />
      <Label at="F 1155,404" middle text="Eastern Avenue" className={EXIT} />
      <Label at="F 1153,475" middle text="1" className={EXIT} />
      <Label at="F 1070,735" text="Lake Shore Bo" className={EXIT} />
      <Label at="F 1035,888" text="Lake Shore Bo" className={EXIT} />
      <Label at="F 1285,958" middle text="157" className={EXIT} />
      <Label at="F 742,1085" middle text="154" className={EXIT} />
      <Label at="F 152,1304" middle text="York Street;" className={EXIT} />
      <Label at="F 152,1372" middle text="Bay Street;" className={EXIT} />
    </svg>
  );
}

const DIRECTIONS = [
  "Start out going west on Av de l' Épée toward Rue de Liège.",
  "Turn left onto Rue de Liège.",
  "Turn right onto Av Wiseman.",
  "Turn right onto Boul Crémazie.",
  "Take the ramp toward QC-40 E/Rue St-Denis/Boul St-Laurent/QC-335.",
  "Merge onto Boul Crémazie.",
  "Merge onto Aut Métropolitaine/QC-40 E toward Québec.",
  "Merge onto Aut Louis-H.-Lafontaine/QC-25 S via EXIT 80-S",
];

const FIELD =
  "h-[129px] w-full rounded-none border-2 border-black bg-white px-10 text-[32px] font-extrabold uppercase tracking-[2px] text-black outline-none";
const BUTTON =
  "h-[129px] w-full cursor-pointer border-2 border-black bg-black text-[32px] font-extrabold uppercase tracking-[2px] text-white";
const ZOOM =
  "flex h-[60px] w-[60px] cursor-pointer items-center justify-center bg-white pt-1 text-[50px] leading-none font-semibold text-black";

export default function App() {
  return (
    <div className="flex h-screen flex-col overflow-hidden bg-white px-[76px] pt-[73px] font-['Open_Sans',sans-serif] text-black">
      <header className="text-center">
        <h1 className="text-[120px] leading-[150px] font-extrabold">Anywhere But Here</h1>
        <p className="mt-[37px] text-[48px] leading-[72px]">
          Tell us where you are and where you want to go, already. We'll give you a bunch of places you can check out if you want.
        </p>
      </header>

      <section className="mt-[75px] border-2 border-black px-[50px] pt-[50px] pb-[70px]">
        <h2 className="text-center text-[60px] leading-[90px] font-extrabold">Get lost, or don't ... whatever, who cares</h2>
        <form className="mt-[49px] grid grid-cols-2 gap-x-[252px] gap-y-10" onSubmit={(e) => e.preventDefault()}>
          <input type="text" aria-label="Your address" defaultValue="8404 Av de l'Épée Montreal QC" className={FIELD} />
          <button type="button" className={BUTTON}>
            Use my location
          </button>
          <input type="text" aria-label="Where you want to go" defaultValue="Pizza" className={FIELD} />
          <button type="submit" className={BUTTON}>
            Take me there, I guess
          </button>
        </form>
      </section>

      <main className="mt-[120px] flex min-h-0 flex-1 justify-between">
        <section className="w-[35%] pt-[10px]">
          <h2 className="text-[60px] leading-[90px] font-extrabold">Get me out of here!</h2>
          <ol className="mt-[38px] flex flex-col gap-9 text-[36px] leading-[54px]">
            {DIRECTIONS.map((step) => (
              <li key={step}>{step}</li>
            ))}
          </ol>
        </section>
        <section aria-label="Map" className="relative w-[58.6%] overflow-hidden border-2 border-b-0 border-black">
          <CityMap />
          <div className="absolute top-5 left-5 flex flex-col divide-y-2 divide-[#cccccc] overflow-hidden rounded-lg border-4 border-black/20 bg-white bg-clip-padding">
            <button type="button" aria-label="Zoom in" className={ZOOM}>
              +
            </button>
            <button type="button" aria-label="Zoom out" className={ZOOM}>
              −
            </button>
          </div>
        </section>
      </main>
    </div>
  );
}
